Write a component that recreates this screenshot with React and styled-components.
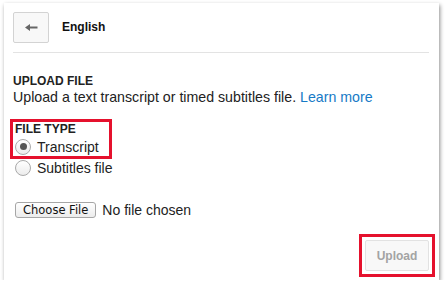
import React from 'react'
import styled, { createGlobalStyle } from 'styled-components'

const GlobalStyle = createGlobalStyle`
    html, body {
        margin: 0;
        padding: 0;
        background: #ffffff;
    }
    body {
        font-family: "Liberation Sans", Arial, sans-serif;
        color: #222;
    }
`

const Card = styled.div`
    box-sizing: border-box;
    width: 435px;
    height: 277px;
    margin: 3px 0 0 4px;
    padding: 9px 10px 9px 9px;
    background: #fff;
    box-shadow: 1px 2px 4px rgba(0, 0, 0, 0.45);
    display: flex;
    flex-direction: column;
`

const Header = styled.div`
    display: flex;
    align-items: center;
    gap: 13px;
    padding-bottom: 9px;
    border-bottom: 1px solid #e3e3e3;
`

const BackButton = styled.button`
    box-sizing: border-box;
    width: 36px;
    height: 31px;
    padding: 0;
    background: #f8f8f8;
    border: 1px solid #d3d3d3;
    border-radius: 2px;
    display: flex;
    align-items: center;
    justify-content: center;
`

const Title = styled.div`
    font-size: 12px;
    font-weight: bold;
    color: #111;
    margin-bottom: 2px;
`

const Heading = styled.div`
    font-size: 12px;
    font-weight: bold;
    line-height: 15px;
    color: #222;
    margin-top: ${ props => props.top || 0 }px;
`

const Description = styled.div`
    font-size: 14.2px;
    line-height: 17px;
    color: #222;
    > a {
        color: #167ac6;
        text-decoration: none;
    }
`

// red annotation frame drawn round a part of the form
const Highlight = styled.div`
    align-self: flex-start;
    width: ${ props => props.w ? props.w + 'px' : 'auto' };
    margin-top: ${ props => props.top || 0 }px;
    outline: 3px solid #e5112d;
    outline-offset: ${ props => props.offset || 0 }px;
    padding-left: ${ props => props.pad || 0 }px;
`

const RadioRow = styled.label`
    display: flex;
    align-items: center;
    gap: 6px;
    height: ${ props => props.h || 20 }px;
    padding-left: ${ props => props.pad || 0 }px;
    font-size: 14px;
    color: #222;
`

const RadioCircle = styled.span`
    box-sizing: border-box;
    width: 16px;
    height: 16px;
    border-radius: 50%;
    border: 1px solid #a9a9a9;
    background: linear-gradient(#ffffff, #ececec);
    display: flex;
    align-items: center;
    justify-content: center;
    &::after {
        content: '';
        width: 7px;
        height: 7px;
        border-radius: 50%;
        background: ${ props => props.checked ? '#555' : 'transparent' };
    }
`

const FileRow = styled.div`
    display: flex;
    align-items: center;
    gap: 6px;
    margin-top: 22px;
    padding-left: 2px;
    font-size: 14px;
`

const ChooseButton = styled.button`
    box-sizing: border-box;
    height: 16px;
    padding: 0 7px;
    font-family: "DejaVu Sans", sans-serif;
    font-size: 11.5px;
    line-height: 14px;
    color: #111;
    background: linear-gradient(#ffffff, #ececec);
    border: 1px solid #a6a6a6;
    border-radius: 3px;
`

const Footer = styled.div`
    margin-top: auto;
    display: flex;
    justify-content: flex-end;
`

const UploadButton = styled.button`
    display: block;
    box-sizing: border-box;
    width: 64px;
    height: 31px;
    padding: 0;
    font-family: "Liberation Sans", Arial, sans-serif;
    font-size: 12px;
    font-weight: bold;
    color: #a3a3a3;
    background: #f8f8f8;
    border: 1px solid #e2e2e2;
    border-radius: 2px;
`

const BackArrow = () => (
    <svg width="13" height="7" viewBox="0 0 13 7">
        <path d="M0 3.5 L5 0 L5 2.4 L12.5 2.4 L12.5 4.6 L5 4.6 L5 7 Z" fill="#666" />
    </svg>
)

const App = () => {
    return (
        <>
            <GlobalStyle />
            <Card>
                <Header>
                    <BackButton><BackArrow /></BackButton>
                    <Title>English</Title>
                </Header>

                <Heading top={21}>UPLOAD FILE</Heading>
                <Description>
                    Upload a text transcript or timed subtitles file. <a href="#">Learn more</a>
                </Description>

                <Highlight w={94} top={16} pad={2}>
                    <Heading>FILE TYPE</Heading>
                    <RadioRow h={19}>
                        <RadioCircle checked />
                        Transcript
                    </RadioRow>
                </Highlight>
                <RadioRow h={24} pad={2}>
                    <RadioCircle />
                    Subtitles file
                </RadioRow>

                <FileRow>
                    <ChooseButton>Choose File</ChooseButton>
                    No file chosen
                </FileRow>

                <Footer>
                    <Highlight offset={3}>
                        <UploadButton>Upload</UploadButton>
                    </Highlight>
                </Footer>
            </Card>
        </>
    )
}

export default App
